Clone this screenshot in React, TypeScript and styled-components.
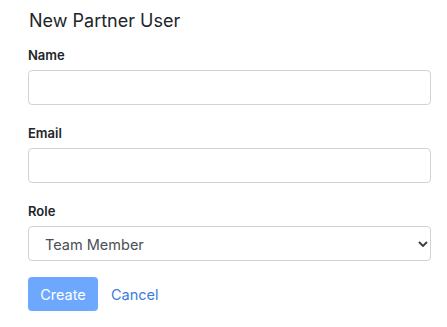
import React from "react";
import styled, { createGlobalStyle } from "styled-components";

const GlobalStyle = createGlobalStyle`
  body {
    margin: 0;
    background: #fff;
    font-family: Inter, "Noto Sans", sans-serif;
    color: #212529;
  }
`;

const Page = styled.div`
  padding: 7px 16px 0 28px;
`;

const Title = styled.h2`
  margin: 0 0 11px 1px;
  font-size: 18px;
  line-height: 27px;
  font-weight: 400;
  color: #212529;
`;

const Field = styled.div<{ $last?: boolean }>`
  margin-bottom: ${(p) => (p.$last ? "0" : "18px")};
`;

const Label = styled.label`
  display: block;
  margin-bottom: 5px;
  font-size: 13px;
  line-height: 20px;
  font-weight: 600;
  color: #212529;
`;

const TextInput = styled.input`
  display: block;
  box-sizing: border-box;
  width: 100%;
  height: 35px;
  padding: 6px 12px;
  border: 1px solid #ced4da;
  border-radius: 4px;
  font: inherit;
  font-size: 14.5px;
  color: #495057;
  background: #fff;
  outline: none;
`;

const SelectWrap = styled.div`
  position: relative;
`;

const Select = styled.select`
  display: block;
  box-sizing: border-box;
  width: 100%;
  height: 35px;
  padding: 2px 30px 0 16px;
  border: 1px solid #ced4da;
  border-radius: 4px;
  font-family: Inter, "Noto Sans", sans-serif;
  font-size: 14.5px;
  color: #495057;
  background: #fff;
  appearance: none;
  outline: none;
`;

const Chevron = styled.svg`
  position: absolute;
  right: 3px;
  top: 15px;
  pointer-events: none;
`;

const Actions = styled.div`
  display: flex;
  align-items: center;
  gap: 13px;
  margin-top: 16px;
`;

const Button = styled.button`
  width: 70px;
  height: 34px;
  padding: 0;
  border: none;
  border-radius: 4px;
  background: ${(p) => (p.disabled ? "#6ea8fe" : "#0d6efd")};
  color: #fff;
  font-family: Inter, "Noto Sans", sans-serif;
  font-size: 14.5px;
`;

const LinkButton = styled.a`
  color: #3b7ddd;
  font-size: 14.5px;
  text-decoration: none;
`;

const App = () => {
  return (
    <Page>
      <GlobalStyle />
      <Title>New Partner User</Title>
      <Field>
        <Label>Name</Label>
        <TextInput type="text" />
      </Field>
      <Field>
        <Label>Email</Label>
        <TextInput type="email" />
      </Field>
      <Field $last>
        <Label>Role</Label>
        <SelectWrap>
          <Select defaultValue="member">
            <option value="member">Team Member</option>
            <option value="admin">Admin</option>
          </Select>
          <Chevron width="10" height="6" viewBox="0 0 10 6">
            <path d="M1 1l4 4 4-4" fill="none" stroke="#3a3a3a" strokeWidth="1.8" />
          </Chevron>
        </SelectWrap>
      </Field>
      <Actions>
        <Button disabled>Create</Button>
        <LinkButton href="#">Cancel</LinkButton>
      </Actions>
    </Page>
  );
};

export default App;
